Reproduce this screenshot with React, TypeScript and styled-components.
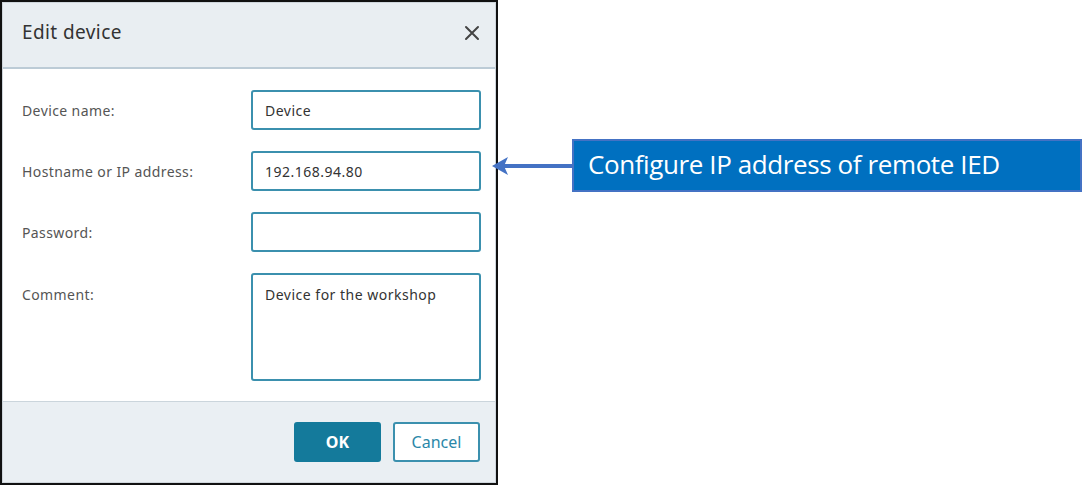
import React from "react";
import styled, { createGlobalStyle } from "styled-components";

const Global = createGlobalStyle`
  html, body { margin: 0; padding: 0; background: #fff; }
  body { font-family: "Noto Sans", "Open Sans", sans-serif; }
`;

const Page = styled.div`
  display: flex;
  align-items: flex-start;
  width: 1082px;
  height: 485px;
`;

const Dialog = styled.div`
  box-sizing: border-box;
  width: 498px;
  height: 485px;
  border: 2px solid #111;
  display: flex;
  flex-direction: column;
  flex-shrink: 0;
`;

const Inner = styled.div`
  flex: 1;
  display: flex;
  flex-direction: column;
  border: 1px solid #cfd6dc;
`;

const Header = styled.div`
  box-sizing: border-box;
  height: 66px;
  background: #e9eef2;
  border-bottom: 2px solid #bccbd6;
  display: flex;
  align-items: center;
  justify-content: space-between;
  padding: 0 15px 6px 19px;
`;

const Title = styled.div`
  font-size: 19px;
  color: #333;
  letter-spacing: 0.4px;
`;

const Close = styled.svg`
  width: 16px;
  height: 16px;
  margin-top: 2px;
`;

const Body = styled.div`
  flex: 1;
  display: grid;
  grid-template-columns: 229px 230px;
  row-gap: 21px;
  padding: 21px 0 20px 19px;
  align-content: start;
  border-bottom: 1px solid #cbd5dc;
`;

const Label = styled.div<{ $top?: boolean }>`
  font-size: 14px;
  letter-spacing: 0.4px;
  color: #555;
  display: flex;
  align-items: ${(p) => (p.$top ? "flex-start" : "center")};
  padding-top: ${(p) => (p.$top ? "12px" : "0")};
`;

const Field = styled.div<{ $tall?: boolean }>`
  box-sizing: border-box;
  height: ${(p) => (p.$tall ? "108px" : "40px")};
  border: 2px solid #3b90ae;
  border-radius: 3px;
  padding: ${(p) => (p.$tall ? "10px 12px" : "0 12px")};
  display: flex;
  align-items: ${(p) => (p.$tall ? "flex-start" : "center")};
  font-size: 14px;
  letter-spacing: 0.5px;
  color: #333;
`;

const Footer = styled.div`
  height: 80px;
  background: #eaeff3;
  display: flex;
  justify-content: flex-end;
  align-items: flex-start;
  gap: 12px;
  padding: 20px 15px 0 0;
  box-sizing: border-box;
`;

const Button = styled.div<{ $primary?: boolean }>`
  box-sizing: border-box;
  width: 87px;
  height: 40px;
  border-radius: 3px;
  border: 2px solid ${(p) => (p.$primary ? "#147a9b" : "#3b90ae")};
  background: ${(p) => (p.$primary ? "#147a9b" : "#fff")};
  color: ${(p) => (p.$primary ? "#fff" : "#2a87a8")};
  font-weight: ${(p) => (p.$primary ? 700 : 400)};
  font-size: 16px;
  display: flex;
  align-items: center;
  justify-content: center;
`;

const Annotation = styled.div`
  display: flex;
  align-items: center;
  margin-top: 139px;
  margin-left: -6px;
`;

const Arrow = styled.svg`
  width: 80px;
  height: 22px;
  flex-shrink: 0;
`;

const Callout = styled.div`
  box-sizing: border-box;
  width: 510px;
  height: 53px;
  background: #0070c0;
  border: 2px solid #4472c4;
  color: #fff;
  font-family: "Open Sans", "Noto Sans", sans-serif;
  font-size: 26px;
  letter-spacing: -0.4px;
  display: flex;
  align-items: center;
  padding: 0 0 4px 14px;
  white-space: nowrap;
`;

export default function App() {
  return (
    <>
      <Global />
      <Page>
        <Dialog>
          <Inner>
            <Header>
              <Title>Edit device</Title>
              <Close viewBox="0 0 16 16">
                <path d="M2 2 L14 14 M14 2 L2 14" stroke="#444" strokeWidth="2" strokeLinecap="round" />
              </Close>
            </Header>
            <Body>
              <Label>Device name:</Label>
              <Field>Device</Field>
              <Label>Hostname or IP address:</Label>
              <Field>192.168.94.80</Field>
              <Label>Password:</Label>
              <Field />
              <Label $top>Comment:</Label>
              <Field $tall>Device for the workshop</Field>
            </Body>
            <Footer>
              <Button $primary>OK</Button>
              <Button>Cancel</Button>
            </Footer>
          </Inner>
        </Dialog>
        <Annotation>
          <Arrow viewBox="0 0 80 22">
            <line x1="12" y1="11" x2="80" y2="11" stroke="#4472c4" strokeWidth="4" />
            <path d="M0 11 L16 2 L12 11 L16 20 Z" fill="#4472c4" />
          </Arrow>
          <Callout>Configure IP address of remote IED</Callout>
        </Annotation>
      </Page>
    </>
  );
}
